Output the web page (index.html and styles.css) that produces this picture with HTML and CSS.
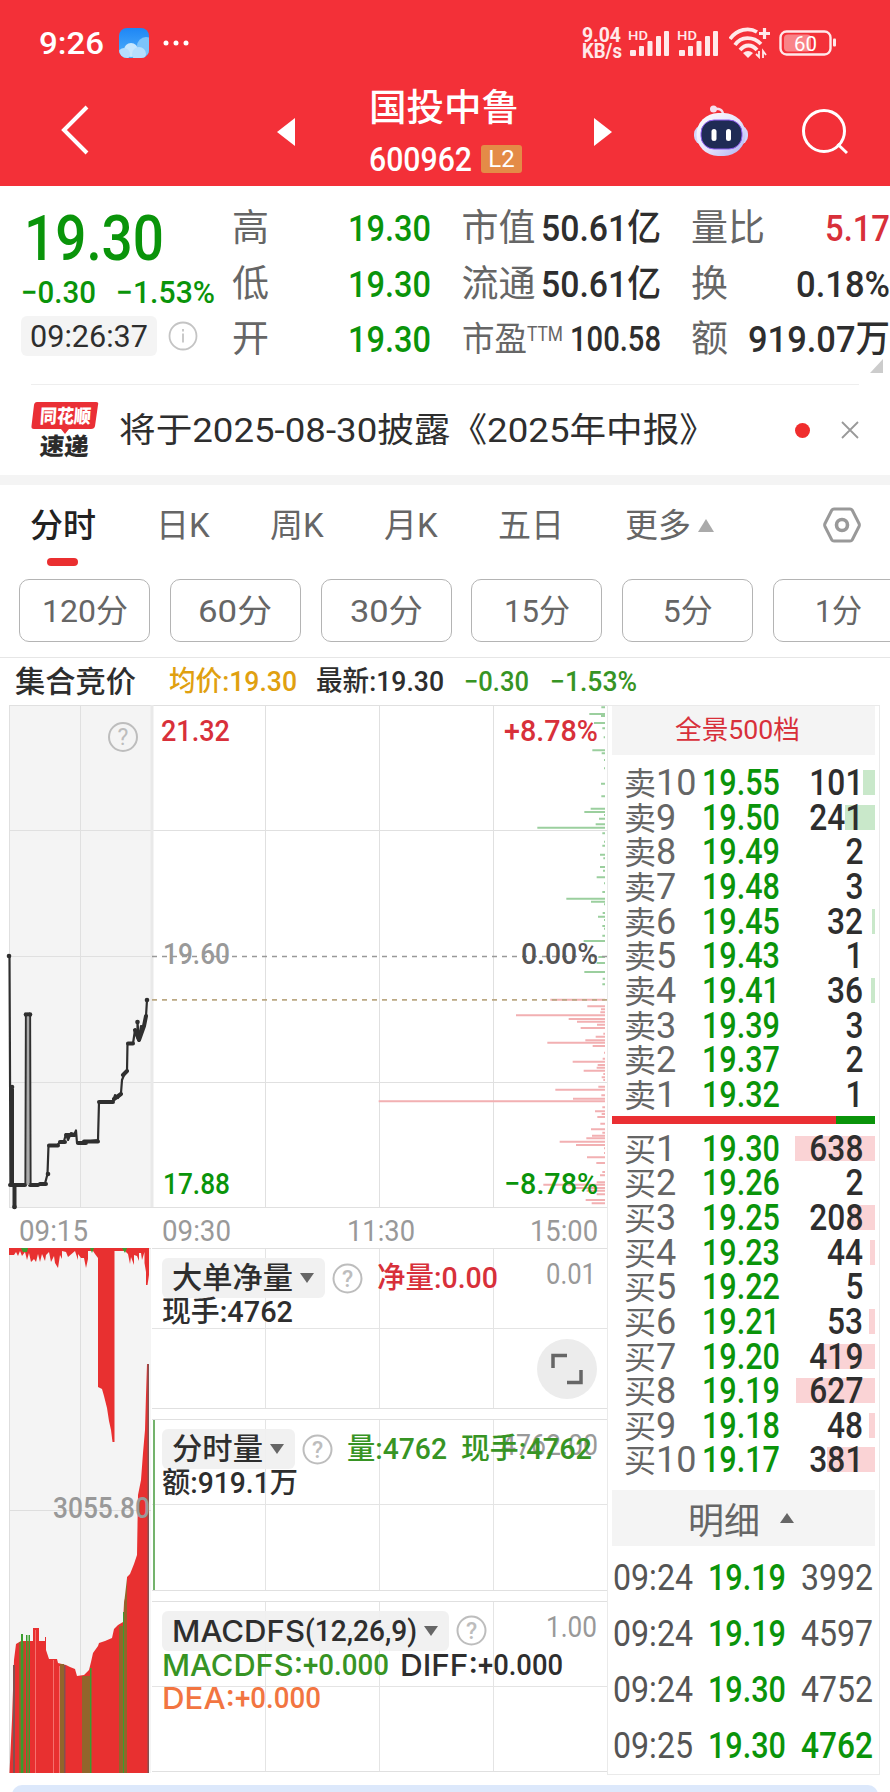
FILE: index.html
```html
<!DOCTYPE html>
<html lang="zh-CN">
<head>
    <meta charset="UTF-8">
    <meta name="viewport" content="width=device-width, initial-scale=1.0">
    <title>国投中鲁 600962</title>
    <link rel="stylesheet" href="styles.css">
</head>
<body>
    <header class="header">
        <div class="status-bar">
            <span class="clock" data-w="65">9:26</span>
            <svg class="weather" width="30" height="30" viewBox="0 0 30 30">
                <defs>
                    <linearGradient id="sky" x1="0" y1="0" x2="0" y2="1"><stop offset="0" stop-color="#1e86f5"/><stop offset="1" stop-color="#4fb0fb"/></linearGradient>
                    <clipPath id="tile"><rect width="30" height="30" rx="8"/></clipPath>
                </defs>
                <g clip-path="url(#tile)">
                    <rect width="30" height="30" fill="url(#sky)"/>
                    <circle cx="27" cy="18" r="9" fill="#7cc3fb"/>
                    <circle cx="12" cy="22" r="7" fill="#c6e6fe"/>
                    <circle cx="5" cy="26" r="6" fill="#b5defe"/>
                    <circle cx="20" cy="26" r="7" fill="#b5defe"/>
                </g>
            </svg>
            <svg class="dots" width="26" height="6" viewBox="0 0 26 6" fill="#fff"><circle cx="3" cy="3" r="2.5"/><circle cx="13" cy="3" r="2.5"/><circle cx="23" cy="3" r="2.5"/></svg>
            <div class="net-speed"><span data-w="39">9.04</span><span data-w="40">KB/s</span></div>
            <svg class="signal" width="42" height="28" viewBox="0 0 42 28" fill="#ffe9ea">
                <text x="0" y="11" font-size="13" font-weight="500" textLength="20" lengthAdjust="spacingAndGlyphs">HD</text>
                <rect x="2" y="21" width="6" height="6" rx="1"/><rect x="11" y="17" width="5" height="10" rx="1"/><rect x="19.500" y="12" width="5" height="15" rx="1"/><rect x="28" y="7" width="5" height="20" rx="1"/><rect x="36" y="2" width="5" height="25" rx="1"/>
            </svg>
            <svg class="signal second" width="42" height="28" viewBox="0 0 42 28" fill="#ffe9ea">
                <text x="0" y="11" font-size="13" font-weight="500" textLength="20" lengthAdjust="spacingAndGlyphs">HD</text>
                <rect x="2" y="21" width="6" height="6" rx="1"/><rect x="11" y="17" width="5" height="10" rx="1"/><rect x="19.500" y="12" width="5" height="15" rx="1"/><rect x="28" y="7" width="5" height="20" rx="1"/><rect x="36" y="2" width="5" height="25" rx="1"/>
            </svg>
            <svg class="wifi" width="42" height="32" viewBox="0 0 42 32" fill="none" stroke="#ffe9ea" stroke-width="3.800">
                <path d="M1 12C8 2 20 0 28 5M6 18C12 9 24 9 32 17M11 23C16 17 23 17 28 23"/>
                <path d="M14 26L19 31L24 26Q19 22 14 26Z" fill="#ffe9ea" stroke="none"/>
                <path d="M35.500 1V12M30 6.500H41" stroke-width="3.200"/>
                <path d="M30 24V30L27 27M34 31V24L37 28" stroke-width="1.800"/>
            </svg>
            <svg class="battery" width="58" height="26" viewBox="0 0 58 26">
                <rect x="5" y="4.500" width="27" height="17" rx="4" fill="#f98488"/>
                <rect x="1.500" y="1.500" width="50" height="23" rx="6" fill="none" stroke="#ffe9ea" stroke-width="2.400"/>
                <rect x="54" y="8.500" width="3" height="8" rx="1" fill="#ffe9ea"/>
                <text x="15" y="20.500" font-size="21" fill="#fff" textLength="23" lengthAdjust="spacingAndGlyphs">60</text>
            </svg>
        </div>
        <div class="nav">
            <svg class="back" width="30" height="50" viewBox="0 0 30 50" fill="none" stroke="#fff" stroke-width="4"><path d="M27 2L4 25L27 48"/></svg>
            <svg class="prev" width="18" height="28" viewBox="0 0 18 28"><path d="M18 0V28L0 14Z" fill="#fff"/></svg>
            <div class="stock">
                <h1 data-w="150">国投中鲁</h1>
                <div class="code-row"><span class="code" data-w="103">600962</span><span class="level">L2</span></div>
            </div>
            <svg class="next" width="18" height="28" viewBox="0 0 18 28"><path d="M0 0V28L18 14Z" fill="#fff"/></svg>
            <svg class="robot" width="56" height="52" viewBox="0 0 56 52">
                <defs><linearGradient id="shell" x1="0" y1="0" x2="1" y2="1"><stop offset="0" stop-color="#fff"/><stop offset=".55" stop-color="#e6e3fb"/><stop offset="1" stop-color="#a9b0f2"/></linearGradient></defs>
                <path d="M20 4C27 3 30 5 30 10" fill="none" stroke="#f6dfee" stroke-width="2.400"/>
                <circle cx="20.500" cy="4" r="3.500" fill="#f6dfee"/>
                <rect x="1" y="20" width="54" height="20" rx="9" fill="#d3d5fa"/>
                <rect x="3.500" y="8" width="49" height="43" rx="21.500" fill="url(#shell)"/>
                <rect x="8" y="15" width="41" height="29" rx="13" fill="#1f2b55" stroke="#8f5df0" stroke-width="1"/>
                <rect x="18.500" y="24" width="5" height="12" rx="2.500" fill="#fff"/>
                <rect x="33" y="24" width="5" height="12" rx="2.500" fill="#fff"/>
            </svg>
            <svg class="search" width="46" height="46" viewBox="0 0 46 46" fill="none" stroke="#fff" stroke-width="3"><circle cx="22" cy="22" r="20.500"/><path d="M35.500 35L45 44"/></svg>
        </div>
    </header>

    <section class="quote">
        <div class="price-block">
            <div class="price" data-w="140">19.30</div>
            <div class="change"><span data-w="75">−0.30</span><span data-w="99">−1.53%</span></div>
            <div class="time-row">
                <span class="time"><span data-w="118">09:26:37</span></span>
                <svg width="30" height="30" viewBox="0 0 30 30" fill="none" stroke="#c4c4c4" stroke-width="1.800"><circle cx="15" cy="15" r="13.500"/><path d="M15 12.500V21.500M15 8V10.500"/></svg>
            </div>
        </div>
        <div class="stats">
            <div class="stat"><span>高</span><b class="down" data-w="83">19.30</b></div>
            <div class="stat"><span>市值</span><b data-w="120">50.61亿</b></div>
            <div class="stat"><span>量比</span><b class="up" data-w="65">5.17</b></div>
            <div class="stat"><span>低</span><b class="down" data-w="83">19.30</b></div>
            <div class="stat"><span>流通</span><b data-w="120">50.61亿</b></div>
            <div class="stat"><span>换</span><b data-w="94">0.18%</b></div>
            <div class="stat"><span>开</span><b class="down" data-w="83">19.30</b></div>
            <div class="stat"><span class="pe"><span data-w="65">市盈</span><sup data-w="36">TTM</sup></span><b class="small" data-w="91">100.58</b></div>
            <div class="stat"><span>额</span><b data-w="142">919.07万</b></div>
        </div>
        <i class="corner"></i>
    </section>

    <section class="news">
        <svg width="68" height="58" viewBox="0 0 68 58">
            <path d="M6 1H65Q68 1 67 4L64 25Q63.500 28 60 28H38L34 33L30 28H3Q0 28 .5 25L3 4Q3.500 1 6 1Z" fill="#ea2f35"/>
            <g class="news-logo" transform="skewX(-4)">
                <text x="10" y="22" font-size="19" fill="#fff" textLength="51" lengthAdjust="spacingAndGlyphs">同花顺</text>
                <text x="12" y="54" font-size="24" fill="#2b2b2b" textLength="49" lengthAdjust="spacingAndGlyphs">速递</text>
            </g>
        </svg>
        <p data-w="597">将于2025-08-30披露《2025年中报》</p>
        <i class="dot"></i>
        <svg class="close" width="18" height="18" viewBox="0 0 18 18" stroke="#999" stroke-width="1.800"><path d="M1 1L17 17M17 1L1 17"/></svg>
    </section>

    <nav class="tabs">
        <span class="tab active">分时</span>
        <span class="tab">日K</span>
        <span class="tab">周K</span>
        <span class="tab">月K</span>
        <span class="tab">五日</span>
        <span class="tab more">更多<svg width="18" height="15" viewBox="0 0 18 15"><path d="M9 1L17 14H1Z" fill="#aaa"/></svg></span>
        <svg class="settings" width="38" height="36" viewBox="0 0 38 36" fill="none" stroke="#999" stroke-width="3"><path d="M11 2H27Q28.500 2 29.300 3.300L36 16.500Q36.700 18 36 19.500L29.300 32.700Q28.500 34 27 34H11Q9.500 34 8.700 32.700L2 19.500Q1.300 18 2 16.500L8.700 3.300Q9.500 2 11 2Z"/><circle cx="19" cy="18" r="5.500" stroke-width="3.600"/></svg>
    </nav>
    <div class="periods">
        <span class="period"><span data-w="86">120分</span></span>
        <span class="period"><span data-w="74">60分</span></span>
        <span class="period"><span data-w="73">30分</span></span>
        <span class="period"><span data-w="66">15分</span></span>
        <span class="period"><span data-w="50">5分</span></span>
        <span class="period"><span data-w="47">1分</span></span>
    </div>

    <div class="summary">
        <span class="phase" data-w="121">集合竞价</span>
        <span class="avg" data-w="128">均价:19.30</span>
        <span class="last" data-w="128">最新:19.30</span>
        <span class="diff" data-w="65">−0.30</span>
        <span class="pct" data-w="87">−1.53%</span>
    </div>

    <main class="market">
        <div class="charts">
            <svg class="price-chart" width="607" height="543" viewBox="0 705 607 543">
                <rect x="9" y="705" width="142" height="502" fill="#f4f4f4"/>
                <!-- grid -->
                <path d="M9 705.500H607M9 830.500H607M9 956.500H151M9 1082.500H607M9 1207.500H607M9.500 705V1207M80.500 705V1207M265.500 705V1207M379.500 705V1207M493.500 705V1207" fill="none" stroke="#e0e0e0"/>
                <path d="M152 705V1207" stroke="#e9e9e9" stroke-width="3"/>
                <!-- order depth, sell side then buy side -->
                <g transform="translate(370 700) scale(.33333)" fill="none" stroke-width="6">
                    <path stroke="#9bcf9e" d="M694 22H705M658 42H705M693 48H705M672 69H705M697 85H705M701 112H705M667 151H705M695 160H705M702 180H705M702 205H705M693 251H705M694 289H705M662 326H705M643 336H705M702 345H705M687 356H705M677 373H705M502 383H705M697 400H705M702 425H705M697 437H705M690 464H705M700 475H705M690 501H705M699 512H705M680 532H705M702 550H705M697 576H705M589 596H705M663 605H705M702 613H705M698 639H705M684 650H705M702 660H705M697 678H705M702 686H705M697 707H705M641 723H705M685 771H705M680 789H705M643 816H705M698 836H705M697 853H705"/>
                    <path stroke="#f2b0b2" d="M541 899H705M652 919H705M693 928H705M691 937H705M438 946H705M596 957H705M621 965H705M681 974H705M632 984H705M700 1001H705M677 1010H705M646 1021H705M532 1028H705M668 1038H705M702 1058H705M698 1076H705M608 1085H705M683 1095H705M680 1103H705M641 1112H705M700 1122H705M695 1132H705M700 1140H705M685 1160H705M556 1169H705M694 1186H705M609 1196H705M26 1204H705M697 1222H705M675 1234H705M695 1242H705M682 1251H705M691 1271H705M663 1288H705M697 1298H705M666 1307H705M649 1315H705M569 1325H705M618 1335H705M702 1345H705M702 1359H705M651 1372H705M679 1389H705M697 1416H705M690 1426H705M680 1447H705M520 1454H705M610 1464H705M650 1472H705M680 1483H705M647 1500H705M665 1510H705"/>
                </g>
                <path d="M152 956.500H607" stroke="#999" stroke-width="1.500" stroke-dasharray="5 5"/>
                <path d="M152 999.800H607" stroke="#bba883" stroke-width="1.800" stroke-dasharray="5 5"/>
                <!-- auction price -->
                <path d="M9.500 956L10.500 1185M12.500 1087V1185M9 1185H25.500L26 1014.500H30L30.500 1185H39L41 1183.500H45L47.500 1174L48.500 1145.500H57L60 1142L64 1141L66 1134L68 1140L71 1133L74.500 1134L76 1130.500L77 1143H84L87 1141.500L98 1140L99 1102H113L115 1095L118 1098L121 1093L122 1080L124 1075L127 1071L127.500 1043.500H133L135 1030L137.500 1038V1022L139 1041L141 1026L144 1027L146 1016L147 1000" fill="none" stroke="#2f2f2f" stroke-width="2.200" stroke-linejoin="round"/>
                <path d="M10 1185H25M14.500 1185V1207M30 1185H38M40 1184H46M49 1145.500H58M60 1142H65M66 1135H75M78 1143H86M84 1141.500H98M99 1102H113M114 1099L121 1094M123 1075L127 1071M128 1043.500H133M135 1030L139 1040L144 1026L146 1016" fill="none" stroke="#2f2f2f" stroke-width="4" stroke-linecap="round" stroke-linejoin="round"/>
                <path d="M12 1089V1185M27 1014.500H30" fill="none" stroke="#2f2f2f" stroke-width="4"/>
                <path d="M28 1016V1185" stroke="#aaa" stroke-width="2.500"/>
                <g fill="#2f2f2f"><circle cx="9" cy="956" r="2.300"/><circle cx="12" cy="1087" r="2.300"/><circle cx="26" cy="1014.500" r="2.300"/><circle cx="30" cy="1014.500" r="2.300"/><circle cx="48" cy="1174" r="2.300"/><circle cx="147" cy="1000" r="2.300"/><circle cx="137.500" cy="1022" r="2.300"/><circle cx="14.500" cy="1207" r="2.300"/></g>
                <circle cx="123" cy="737" r="14" fill="none" stroke="#bdbdbd" stroke-width="2"/>
                <text x="123" y="745" class="mark">?</text>
                <g class="axis" font-size="30">
                    <text x="161" y="741" class="up" textLength="69" lengthAdjust="spacingAndGlyphs">21.32</text>
                    <text x="163" y="964" textLength="67" lengthAdjust="spacingAndGlyphs">19.60</text>
                    <text x="163" y="1194" class="down" textLength="67" lengthAdjust="spacingAndGlyphs">17.88</text>
                    <text x="504" y="741" class="up" textLength="94" lengthAdjust="spacingAndGlyphs">+8.78%</text>
                    <text x="521" y="964" class="flat" textLength="77" lengthAdjust="spacingAndGlyphs">0.00%</text>
                    <text x="504" y="1194" class="down" textLength="94" lengthAdjust="spacingAndGlyphs">−8.78%</text>
                    <g class="hours">
                        <text x="19" y="1240.500" textLength="69" lengthAdjust="spacingAndGlyphs">09:15</text>
                        <text x="162" y="1240.500" textLength="69" lengthAdjust="spacingAndGlyphs">09:30</text>
                        <text x="347" y="1240.500" textLength="68" lengthAdjust="spacingAndGlyphs">11:30</text>
                        <text x="530" y="1240.500" textLength="68" lengthAdjust="spacingAndGlyphs">15:00</text>
                    </g>
                </g>
            </svg>

            <div class="lower">
                <svg class="auction-volume" width="152" height="526" viewBox="0 1248 152 526">
                    <rect x="9" y="1248" width="142" height="525" fill="#f4f4f4"/>
                    <path d="M9 1248.500H151M9 1510.500H151M9.500 1248V1773M80.500 1248V1773" stroke="#dedede"/>
                    <!-- unmatched volume, hanging from the top -->
                    <path fill="#e83030" d="M9 1248H149V1275L147.500 1285H146V1272L144.500 1263V1252L142 1260L141 1253H139V1261L137 1256L134 1255V1265L131 1257L130 1264L128 1254L125 1251H114.500V1442H112.500L111 1430L109 1421L107 1408L104 1396L102 1389L98 1387V1258L95 1254L93 1251H88V1259L86 1268L84 1258L81 1258L78 1254V1260L75 1251L68 1257L66 1252L62 1251V1259L60 1255L58 1268L55 1263L54 1256L51 1262L49 1252L46 1255L45 1261L42 1254L40 1262L38 1254L36 1262L34 1259L31 1262L29 1253L27 1260L25 1252L22 1256L20 1251L18 1256L16 1252L14 1255H9Z"/>
                    <path fill="#3a9d2e" d="M21 1248H28L27 1252H23ZM90 1248H94L92 1253ZM122 1248H127L125 1253Z"/>
                    <!-- matched volume -->
                    <path fill="#e83030" d="M9.500 1773L12 1720L14 1660L16 1644L21 1641H33V1628H39V1641H45V1637H46V1650L49 1659H57L58 1663L66 1665L70 1667L75 1669L77 1676L84 1675L89 1670L91 1662L93 1653L98 1646L99 1643L105 1641L112 1638L114 1629L118 1625L123 1622L124 1603L127 1590V1577L130 1574L134 1564L137 1555L138 1495L141 1480L143 1453L145 1430L146 1395L147 1364H149V1773Z"/>
                    <path fill="#3a9d2e" d="M21 1634H23V1773H21ZM26 1635H27.500V1773H26ZM28.500 1635H30V1773H28.500ZM90 1668H91.500V1773H90ZM123 1612H124V1773H123Z"/>
                    <path fill="#92652b" d="M19 1642H21V1773H19ZM23 1642H24.500V1773H23ZM60 1664H64V1773H60ZM82 1676H90V1773H82ZM119 1626H123V1773H119ZM124 1604L127 1578V1773H124Z"/>
                    <path fill="#85504f" d="M13 1665H15V1773H13ZM147.500 1364H149V1773H147.500ZM64 1665H65.500V1773H64Z"/>
                    <path stroke="#f5706d" d="M35.500 1630V1773M53.500 1660V1773M59.500 1666V1773"/>
                    <text x="53" y="1518" class="axis" font-size="30" textLength="97" lengthAdjust="spacingAndGlyphs">3055.80</text>
                </svg>

                <div class="panes">
                    <div class="pane pane-net">
                        <span class="scale" data-w="50">0.01</span>
                        <div class="pane-head">
                            <span class="chip"><span data-w="121">大单净量</span><i class="caret"></i></span>
                            <svg class="help" width="31" height="31" viewBox="0 0 31 31"><circle cx="15.500" cy="15.500" r="14" fill="none" stroke="#bdbdbd" stroke-width="2"/><text x="15.500" y="23.500" class="mark">?</text></svg>
                            <span class="up" data-w="121">净量:0.00</span>
                        </div>
                        <div class="pane-line"><span data-w="131">现手:4762</span></div>
                        <span class="expand"><svg width="32" height="32" viewBox="0 0 32 32" fill="none" stroke="#666" stroke-width="3.500"><path d="M2 15V2.500H16M30 17V29.500H16"/></svg></span>
                    </div>
                    <div class="pane pane-volume">
                        <span class="scale" data-w="97">4762.00</span>
                        <div class="pane-head">
                            <span class="chip"><span data-w="91">分时量</span><i class="caret"></i></span>
                            <svg class="help" width="31" height="31" viewBox="0 0 31 31"><circle cx="15.500" cy="15.500" r="14" fill="none" stroke="#bdbdbd" stroke-width="2"/><text x="15.500" y="23.500" class="mark">?</text></svg>
                            <span class="green" data-w="100">量:4762</span>
                            <span class="green hands" data-w="131">现手:4762</span>
                        </div>
                        <div class="pane-line"><span data-w="136">额:919.1万</span></div>
                    </div>
                    <div class="pane pane-macd">
                        <span class="scale" data-w="51">1.00</span>
                        <div class="pane-head">
                            <span class="chip"><span class="latin" data-w="133">MACDFS</span><span data-w="112">(12,26,9)</span><i class="caret"></i></span>
                            <svg class="help" width="31" height="31" viewBox="0 0 31 31"><circle cx="15.500" cy="15.500" r="14" fill="none" stroke="#bdbdbd" stroke-width="2"/><text x="15.500" y="23.500" class="mark">?</text></svg>
                        </div>
                        <div class="pane-line green"><span class="latin" data-w="141">MACDFS:</span><span data-w="86">+0.000</span><span class="latin dif" data-w="78">DIFF:</span><span class="ink" data-w="85">+0.000</span></div>
                        <div class="pane-line dea"><span class="latin" data-w="73">DEA:</span><span data-w="86">+0.000</span></div>
                    </div>
                </div>
            </div>
        </div>

        <aside class="book">
            <div class="book-head"><span data-w="125">全景500档</span></div>
            <div class="levels sell">
                <div class="level-row"><span>卖<em>10</em></span><b data-w="78">19.55</b><i style="width:12.5px"></i><u>101</u></div>
                <div class="level-row"><span>卖<em>9</em></span><b data-w="78">19.50</b><i style="width:30px"></i><u>241</u></div>
                <div class="level-row"><span>卖<em>8</em></span><b data-w="78">19.49</b><u>2</u></div>
                <div class="level-row"><span>卖<em>7</em></span><b data-w="78">19.48</b><u>3</u></div>
                <div class="level-row"><span>卖<em>6</em></span><b data-w="78">19.45</b><i style="width:3.500px"></i><u>32</u></div>
                <div class="level-row"><span>卖<em>5</em></span><b data-w="78">19.43</b><u>1</u></div>
                <div class="level-row"><span>卖<em>4</em></span><b data-w="78">19.41</b><i style="width:4.500px"></i><u>36</u></div>
                <div class="level-row"><span>卖<em>3</em></span><b data-w="78">19.39</b><u>3</u></div>
                <div class="level-row"><span>卖<em>2</em></span><b data-w="78">19.37</b><u>2</u></div>
                <div class="level-row"><span>卖<em>1</em></span><b data-w="78">19.32</b><u>1</u></div>
            </div>
            <div class="ratio"><i style="width:85.2%"></i></div>
            <div class="levels buy">
                <div class="level-row"><span>买<em>1</em></span><b data-w="78">19.30</b><i style="width:80px"></i><u>638</u></div>
                <div class="level-row"><span>买<em>2</em></span><b data-w="78">19.26</b><u>2</u></div>
                <div class="level-row"><span>买<em>3</em></span><b data-w="78">19.25</b><i style="width:26px"></i><u>208</u></div>
                <div class="level-row"><span>买<em>4</em></span><b data-w="78">19.23</b><i style="width:5px"></i><u>44</u></div>
                <div class="level-row"><span>买<em>5</em></span><b data-w="78">19.22</b><u>5</u></div>
                <div class="level-row"><span>买<em>6</em></span><b data-w="78">19.21</b><i style="width:6.500px"></i><u>53</u></div>
                <div class="level-row"><span>买<em>7</em></span><b data-w="78">19.20</b><i style="width:52px"></i><u>419</u></div>
                <div class="level-row"><span>买<em>8</em></span><b data-w="78">19.19</b><i style="width:79px"></i><u>627</u></div>
                <div class="level-row"><span>买<em>9</em></span><b data-w="78">19.18</b><i style="width:6px"></i><u>48</u></div>
                <div class="level-row"><span>买<em>10</em></span><b data-w="78">19.17</b><i style="width:48px"></i><u>381</u></div>
            </div>
            <div class="detail-head">明细<svg width="16" height="12" viewBox="0 0 16 12"><path d="M8 1L15 11H1Z" fill="#666"/></svg></div>
            <div class="trades">
                <div class="trade"><span data-w="80">09:24</span><b data-w="78">19.19</b><span data-w="72">3992</span></div>
                <div class="trade"><span data-w="80">09:24</span><b data-w="78">19.19</b><span data-w="72">4597</span></div>
                <div class="trade"><span data-w="80">09:24</span><b data-w="78">19.30</b><span data-w="72">4752</span></div>
                <div class="trade"><span data-w="80">09:25</span><b data-w="78">19.30</b><span class="down strong" data-w="72">4762</span></div>
            </div>
        </aside>
    </main>
    <div class="bottom-sheet"></div>

    <script>
        document.querySelectorAll('[data-w]').forEach(function(el) {
            const natural = el.getBoundingClientRect().width;
            const width = Number(el.dataset.w);
            el.style.transform = 'scaleX(' + width / natural + ')';
            el.style.marginRight = (width - natural) + 'px';
        });
    </script>
</body>
</html>
```
FILE: styles.css
```css
* {
    margin: 0;
    padding: 0;
    box-sizing: border-box;
}

body {
    width: 890px;
    height: 1792px;
    overflow: hidden;
    background: #fff;
    color: #2e2e2e;
    font-family: Roboto, "Noto Sans CJK SC", sans-serif;
}

i, em, u {
    font-style: normal;
    text-decoration: none;
}

b {
    font-weight: 500;
}

svg {
    display: block;
    flex-shrink: 0;
}

[data-w] {
    display: inline-block;
    flex-shrink: 0;
    white-space: nowrap;
    transform-origin: left center;
}

.up {
    color: #d8303a;
    fill: #d8303a;
}

.down {
    color: #0a940a;
    fill: #0a940a;
}

.green {
    color: #379424;
}

/* header */
.header {
    height: 186px;
    background: #f33038;
    color: #fff;
}

.status-bar {
    display: flex;
    align-items: center;
    height: 85px;
    padding-left: 39px;
}

.clock {
    padding-top: 1px;
    font-size: 32px;
    font-weight: 500;
}

.weather {
    margin-left: 15px;
}

.dots {
    margin-left: 14px;
}

.net-speed {
    display: flex;
    flex-direction: column;
    align-items: flex-start;
    margin-left: 393px;
    width: 40px;
    font-size: 20px;
    font-weight: 700;
    line-height: 16px;
    color: #ffe9ea;
}

.signal {
    margin-left: 6px;
}

.signal.second {
    margin-left: 7px;
}

.wifi {
    margin-left: 10px;
}

.battery {
    margin-left: 8px;
}

.nav {
    display: flex;
    align-items: flex-start;
    height: 101px;
}

.back {
    margin: 20px 0 0 60px;
}

.prev {
    margin: 33px 0 0 187px;
}

.stock {
    width: 158px;
    margin-left: 74px;
}

.stock h1 {
    height: 44px;
    margin-top: 2px;
    font-size: 37px;
    font-weight: 500;
    line-height: 44px;
}

.code-row {
    display: flex;
    align-items: center;
    height: 30px;
    margin-top: 13px;
}

.code {
    font-size: 33px;
    font-weight: 500;
}

.code-row .level {
    width: 41px;
    height: 28px;
    margin-left: 9px;
    border-radius: 3px;
    background: #e48b47;
    font-size: 24px;
    line-height: 28px;
    text-align: center;
}

.next {
    margin: 33px 0 0 67px;
}

.robot {
    margin: 20px 0 0 81px;
}

.search {
    margin: 24px 0 0 53px;
}

/* quote */
.quote {
    position: relative;
    display: flex;
    height: 198px;
    padding-top: 15px;
}

.price-block {
    width: 232px;
    padding-left: 21px;
}

.price {
    height: 75px;
    margin-left: 3px;
    color: #0a940a;
    font-size: 63px;
    font-weight: 500;
    line-height: 75px;
}

.change {
    display: flex;
    gap: 20px;
    height: 36px;
    color: #0a940a;
    font-size: 31px;
    font-weight: 500;
    line-height: 34px;
}

.time-row {
    display: flex;
    align-items: center;
    gap: 11px;
    margin-top: 4px;
}

.time {
    width: 136px;
    height: 40px;
    padding-left: 9px;
    border-radius: 6px;
    background: #f4f4f4;
    font-size: 32px;
    line-height: 40px;
}

.stats {
    display: grid;
    grid-template-columns: 199px 199px 199px;
    grid-auto-rows: 55.5px;
    column-gap: 30.5px;
}

.stat {
    display: flex;
    align-items: center;
    justify-content: space-between;
    color: #666;
    font-size: 37px;
    line-height: 55px;
}

.stat b {
    color: #2e2e2e;
    font-size: 37px;
}

.stat b.up {
    color: #d8303a;
}

.stat b.down {
    color: #0a940a;
}

.stat b.small {
    font-size: 35px;
}

.pe {
    display: flex;
    font-size: 34px;
}

.pe sup {
    font-size: 20px;
    line-height: 44px;
}

.corner {
    position: absolute;
    right: 7px;
    bottom: 11px;
    border-left: 13px solid transparent;
    border-bottom: 14px solid #ccc;
}

/* news */
.news {
    display: flex;
    align-items: center;
    width: 828px;
    height: 91px;
    margin-left: 31px;
    border-top: 1.500px solid #eee;
}

.news-logo {
    font-weight: 900;
}

.news p {
    margin-left: 20px;
    font-size: 34px;
    line-height: 50px;
}

.dot {
    width: 15px;
    height: 15px;
    margin-left: 79px;
    border-radius: 50%;
    background: #f02d2d;
}

.close {
    margin-left: 31px;
}

/* tabs */
.tabs {
    display: flex;
    align-items: flex-start;
    height: 104px;
    padding: 19px 0 0 30px;
    box-shadow: inset 0 10px #f4f4f4;
    color: #666;
    font-size: 33px;
    line-height: 64px;
}

.tab {
    width: 114px;
    height: 75px;
}

.tab:first-child {
    width: 126px;
}

.tab:nth-child(5) {
    width: 127px;
}

.tab.active {
    color: #222;
    font-weight: 500;
}

.tab.active::after {
    content: "";
    display: block;
    width: 31px;
    height: 8px;
    margin: 0 0 0 17px;
    border-radius: 4px;
    background: #ea2f30;
}

.tab.more {
    display: flex;
    width: 198px;
}

.tab.more svg {
    margin: 24px 0 0 6px;
}

.settings {
    margin-top: 13px;
}

.periods {
    display: flex;
    gap: 19.800px;
    height: 79px;
    padding-left: 19px;
    border-bottom: 1.500px solid #e6e6e6;
}

.period {
    flex: 0 0 131px;
    height: 63px;
    border: 1.500px solid #b4b4b4;
    border-radius: 10px;
    color: #666;
    font-size: 32px;
    line-height: 62px;
    text-align: center;
}

.summary {
    display: flex;
    align-items: center;
    height: 47px;
    padding: 1px 0 0 15px;
    font-size: 28px;
    font-weight: 500;
    line-height: 46px;
}

.phase {
    font-size: 30px;
}

.avg {
    margin-left: 33px;
    color: #e0a010;
}

.last {
    margin-left: 19px;
}

.diff {
    margin-left: 20px;
}

.pct {
    margin-left: 21px;
}

.diff, .pct {
    color: #379424;
}

/* charts */
.market {
    display: flex;
    height: 1070px;
}

.charts {
    width: 607px;
}

.axis {
    fill: #999;
    font-weight: 500;
}

.axis .up {
    fill: #d8303a;
}

.axis .down {
    fill: #0a940a;
}

.axis .flat {
    fill: #555;
}

.axis .hours {
    font-weight: 400;
}

.mark {
    fill: #bdbdbd;
    font-size: 23px;
    text-anchor: middle;
}

.lower {
    display: flex;
}

.panes {
    display: flex;
    flex-direction: column;
    gap: 10px;
    width: 455px;
    height: 524px;
}

.pane {
    position: relative;
    flex: 1 0 170px;
    padding: 9px 0 0 10px;
    border-top: 1px solid #e0e0e0;
    border-bottom: 1px solid #e0e0e0;
    background:
        linear-gradient(#e4e4e4, #e4e4e4) 113px 0 / 1px 100% no-repeat,
        linear-gradient(#e4e4e4, #e4e4e4) 227px 0 / 1px 100% no-repeat,
        linear-gradient(#e4e4e4, #e4e4e4) 341px 0 / 1px 100% no-repeat,
        linear-gradient(#e4e4e4, #e4e4e4) 0 50% / 100% 1px no-repeat;
    font-size: 29px;
    font-weight: 500;
}

.pane-net {
    flex: 0 0 161px;
}

.pane-volume::before {
    content: "";
    position: absolute;
    left: 1px;
    top: 0;
    width: 2px;
    height: 100%;
    background: #74b36c;
}

.pane-head {
    position: relative;
    display: flex;
    align-items: center;
    height: 40px;
    line-height: 40px;
}

.chip {
    display: flex;
    align-items: center;
    height: 40px;
    padding: 0 11px 0 10px;
    border-radius: 6px;
    background: rgba(240, 240, 240, .93);
}

.chip [data-w] {
    font-size: 30px;
}

.caret {
    margin-left: 7px;
    border: 7.500px solid transparent;
    border-top: 10px solid #666;
    border-bottom: 0;
}

.help {
    margin: 0 14px 0 7px;
}

.hands {
    margin-left: 14px;
}

.pane-line {
    position: relative;
    display: flex;
    height: 28px;
    line-height: 28px;
}

.pane-line + .pane-line {
    margin-top: 5px;
}

.pane .latin {
    font-family: Inter, Roboto, sans-serif;
    font-size: 30px;
    font-weight: 500;
}

.dif {
    margin-left: 11px;
}

.dif, .ink {
    color: #2e2e2e;
}

.dea {
    color: #f27541;
}

.scale {
    position: absolute;
    top: 8px;
    left: 394px;
    color: #999;
    font-size: 30px;
    font-weight: 400;
    line-height: 34px;
}

.pane-volume .scale {
    left: 349px;
}

.expand {
    position: absolute;
    left: 385px;
    top: 90px;
    display: flex;
    align-items: center;
    justify-content: center;
    width: 60px;
    height: 60px;
    border-radius: 50%;
    background: #ececec;
}

/* order book */
.book {
    width: 273px;
    padding: 0 4px;
    border: 1px solid #eaeaea;
}

.book-head {
    height: 49px;
    padding-left: 63px;
    background: #f4f4f4;
    color: #d8303a;
    font-size: 26px;
    line-height: 48px;
}

.levels {
    margin-top: 10px;
}

.level-row {
    position: relative;
    display: flex;
    height: 34.670px;
    padding: 0 12px;
    font-size: 36px;
    line-height: 36px;
}

.level-row span {
    width: 78px;
    color: #666;
    font-size: 32px;
    white-space: nowrap;
}

.level-row em {
    font-size: 36px;
}

.level-row b {
    color: #0a940a;
}

.level-row i {
    position: absolute;
    right: 0;
    top: 5px;
    height: 25px;
    background: #c9e8ca;
}

.buy .level-row i {
    background: #fad3d5;
}

.level-row u {
    position: relative;
    margin-left: auto;
    font-weight: 500;
    transform: scaleX(.88);
    transform-origin: right center;
}

.ratio {
    height: 8.500px;
    margin-top: 4px;
    background: #0a940a;
}

.ratio i {
    display: block;
    height: 100%;
    background: #ea2f33;
}

.buy {
    margin-top: 6.500px;
}

.detail-head {
    display: flex;
    align-items: center;
    height: 56px;
    margin-top: 13px;
    padding-left: 76px;
    background: #f4f4f4;
    color: #666;
    font-size: 36px;
}

.detail-head svg {
    margin-left: 19px;
}

.trades {
    padding-top: 4px;
}

.trade {
    display: flex;
    align-items: center;
    justify-content: space-between;
    height: 56px;
    padding: 0 2px 0 1px;
    color: #555;
    font-size: 36px;
}

.trade b {
    color: #0a940a;
}

.strong {
    font-weight: 500;
}

.bottom-sheet {
    height: 20px;
    margin: 10px 12px 0;
    border-radius: 16px;
    background: #dce8fb;
}
```
